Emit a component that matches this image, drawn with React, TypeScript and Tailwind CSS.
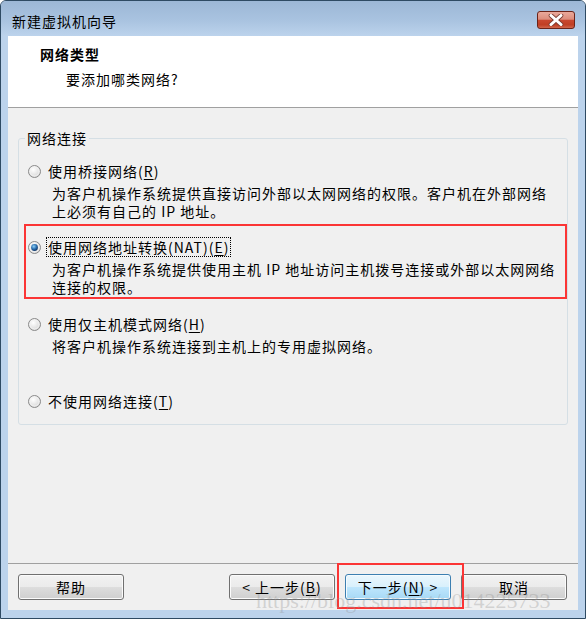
import React from 'react';

function Radio({ checked }: { checked?: boolean }) {
  return (
    <svg width="13" height="13" viewBox="0 0 13 13" className="shrink-0">
      <defs>
        <radialGradient id="rb-bg" cx="40%" cy="35%" r="70%">
          <stop offset="0%" stopColor="#ffffff" />
          <stop offset="100%" stopColor="#d4d4d4" />
        </radialGradient>
        <radialGradient id="rb-dot" cx="40%" cy="35%" r="70%">
          <stop offset="0%" stopColor="#8fd0f5" />
          <stop offset="55%" stopColor="#2a6fb0" />
          <stop offset="100%" stopColor="#0b2d5c" />
        </radialGradient>
      </defs>
      <circle cx="6.5" cy="6.5" r="6" fill="url(#rb-bg)" stroke="#8a8a8a" />
      <circle cx="6.5" cy="6.5" r="4.5" fill="none" stroke="#f4f4f4" strokeWidth="0.8" />
      {checked && <circle cx="6.5" cy="6.5" r="3.4" fill="url(#rb-dot)" />}
    </svg>
  );
}

function Btn({ children, active }: { children: React.ReactNode; active?: boolean }) {
  return (
    <button
      type="button"
      className={
        active
          ? 'w-[106px] h-[26px] rounded-[3px] border border-[#3c7fb1] bg-[linear-gradient(#eaf6fd_0%,#d9f0fc_50%,#bee6fd_51%,#a7d9f5_100%)] shadow-[inset_0_0_0_1px_#f4fbff] text-[14px] tracking-[1px] text-black flex items-center justify-center'
          : 'w-[106px] h-[26px] rounded-[3px] border border-[#707070] bg-[linear-gradient(#f2f2f2_0%,#ebebeb_50%,#dddddd_51%,#cfcfcf_100%)] shadow-[inset_0_0_0_1px_#fbfbfb] text-[14px] tracking-[1px] text-black flex items-center justify-center'
      }
    >
      {children}
    </button>
  );
}

export default function App() {
  return (
    <div className="relative w-[586px] h-[619px] flex flex-col border border-[#2e4a63] rounded-t-[6px] bg-[#bcd3ec] text-black font-['Noto_Sans_CJK_SC','Liberation_Sans',sans-serif] overflow-hidden">
      {/* title bar */}
      <div className="h-[35px] flex items-start justify-between pl-[11px] pr-[10px] bg-[linear-gradient(#9cb7d6_0%,#a9c3e0_55%,#bcd3ec_100%)]">
        <div className="pt-[11px] text-[14px] leading-[18px] tracking-[1px]">新建虚拟机向导</div>
        <div className="mt-[10px] w-[38px] h-[18px] rounded-[3px] border border-[#6b2318] bg-[linear-gradient(#eaa99b_0%,#dc8d7c_45%,#c8472f_52%,#c03f24_80%,#d0664c_100%)] flex items-center justify-center">
          <svg width="16" height="12" viewBox="0 0 16 12">
            <path d="M3 1.5 L13 10.5 M13 1.5 L3 10.5" stroke="#7a3a30" strokeWidth="4.6" strokeLinecap="round" />
            <path d="M3 1.5 L13 10.5 M13 1.5 L3 10.5" stroke="#ffffff" strokeWidth="3" strokeLinecap="round" />
          </svg>
        </div>
      </div>

      <div className="flex-1 flex flex-col mx-[7px] mb-[8px]">
        {/* header */}
        <div className="h-[72px] bg-white pt-[9px] pl-[32px] border-b border-[#a0a0a0]">
          <div className="text-[14px] leading-[18px] tracking-[1px] font-bold">网络类型</div>
          <div className="mt-[7px] ml-[26px] text-[14px] leading-[18px] tracking-[1px]">要添加哪类网络?</div>
        </div>

        {/* content */}
        <div className="flex-1 flex flex-col bg-[#f0f0f0] text-[14px] tracking-[1px]">
          <fieldset className="mt-[21px] mx-[10px] border border-[#d5dfe5] rounded-[3px] pb-[13px]">
            <legend className="ml-[6px] px-[2px] leading-[18px]">网络连接</legend>

            <div className="mt-[14px] pl-[9px]">
              <div className="h-[20px] flex items-center gap-[7px]">
                <Radio />
                <span>
                  使用桥接网络(<u className="underline-offset-2">R</u>)
                </span>
              </div>
              <div className="mt-[3px] ml-[24px] leading-[18px] whitespace-nowrap">
                <div>为客户机操作系统提供直接访问外部以太网网络的权限。客户机在外部网络</div>
                <div>上必须有自己的 IP 地址。</div>
              </div>
            </div>

            <div className="mt-[4px] ml-[5px] border-2 border-[#fb3535] pt-[11px] pb-[1px] pl-[2px]">
              <div className="h-[20px] flex items-center gap-[5px]">
                <Radio checked />
                <span className="border border-dotted border-black pl-[1px] pr-[1px] leading-[18px]">
                  使用网络地址转换(NAT)(<u className="underline-offset-2">E</u>)
                </span>
              </div>
              <div className="mt-[3px] ml-[24px] leading-[18px] whitespace-nowrap">
                <div>为客户机操作系统提供使用主机 IP 地址访问主机拨号连接或外部以太网网络</div>
                <div>连接的权限。</div>
              </div>
            </div>

            <div className="mt-[15px] pl-[9px]">
              <div className="h-[20px] flex items-center gap-[7px]">
                <Radio />
                <span>
                  使用仅主机模式网络(<u className="underline-offset-2">H</u>)
                </span>
              </div>
              <div className="mt-[3px] ml-[24px] leading-[18px] whitespace-nowrap">
                <div>将客户机操作系统连接到主机上的专用虚拟网络。</div>
              </div>
            </div>

            <div className="mt-[36px] pl-[9px]">
              <div className="h-[20px] flex items-center gap-[7px]">
                <Radio />
                <span>
                  不使用网络连接(<u className="underline-offset-2">T</u>)
                </span>
              </div>
            </div>
          </fieldset>

          <div className="flex-1" />

          {/* buttons */}
          <div className="border-t border-[#a0a0a0] pt-[10px] pb-[10px] flex justify-between pl-[10px] pr-[11px]">
            <Btn>帮助</Btn>
            <div className="flex gap-[10px]">
              <Btn>
                &lt; 上一步(<u className="underline-offset-2">B</u>)
              </Btn>
              <div className="relative">
                <Btn active>
                  下一步(<u className="underline-offset-2">N</u>) &gt;
                </Btn>
                <div className="absolute left-[-8px] top-[-11px] w-[127px] h-[46px] border-2 border-[#fb3535] pointer-events-none" />
              </div>
              <Btn>取消</Btn>
            </div>
          </div>
        </div>
      </div>

      <div className="absolute left-[255px] top-[589px] text-[22px] leading-none font-['Liberation_Serif',serif] text-[rgba(150,150,150,0.35)] pointer-events-none whitespace-nowrap">
        https://blog.csdn.net/u014225733
      </div>
    </div>
  );
}
